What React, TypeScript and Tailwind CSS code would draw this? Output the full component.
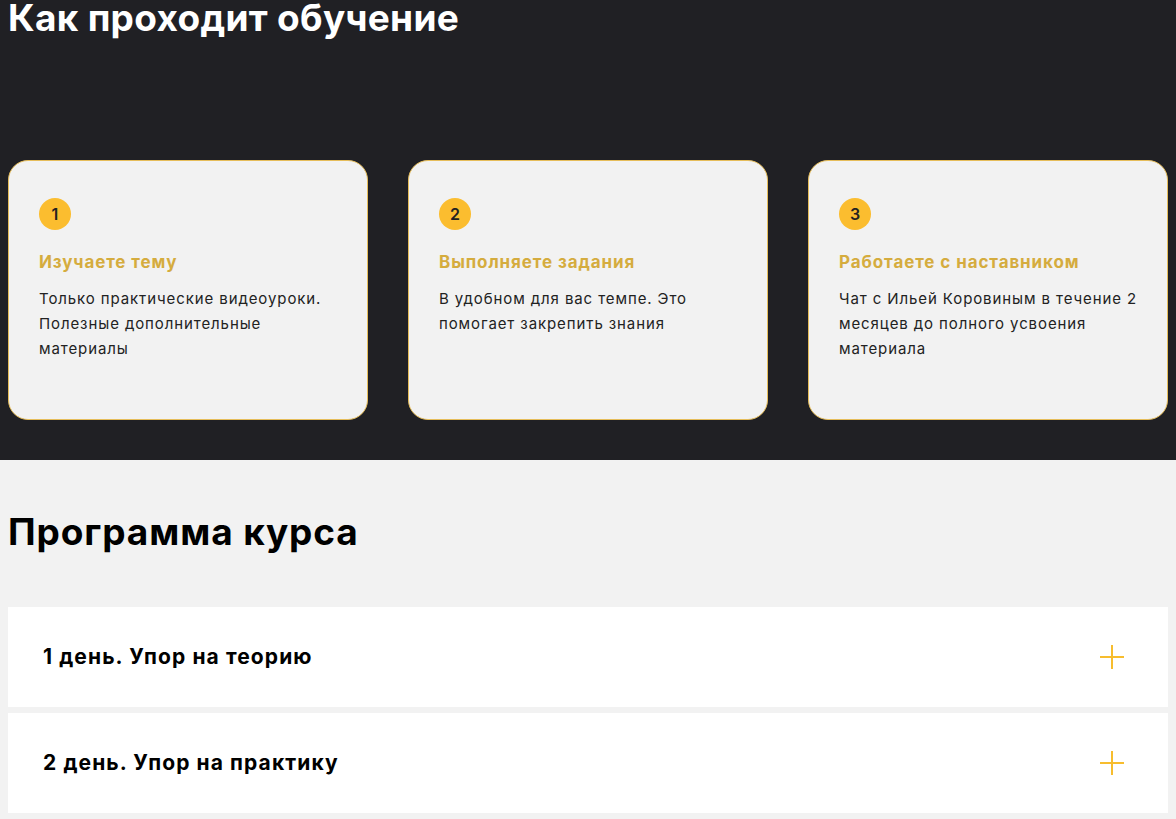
import React from 'react';

const steps = [
  {
    n: 1,
    title: 'Изучаете тему',
    text: 'Только практические видеоуроки. Полезные дополнительные материалы',
  },
  {
    n: 2,
    title: 'Выполняете задания',
    text: 'В удобном для вас темпе. Это помогает закрепить знания',
  },
  {
    n: 3,
    title: 'Работаете с наставником',
    text: 'Чат с Ильей Коровиным в течение 2 месяцев до полного усвоения материала',
  },
];

const days = ['1 день. Упор на теорию', '2 день. Упор на практику'];

const Plus = () => (
  <svg width="26" height="26" viewBox="0 0 26 26" fill="none">
    <path d="M13 1v24M1 13h24" stroke="#f7bd2e" strokeWidth="2" />
  </svg>
);

export default function App() {
  return (
    <div className="min-h-screen bg-[#f2f2f2]" style={{ fontFamily: 'Inter, "Noto Sans", sans-serif' }}>
      {/* Как проходит обучение */}
      <section className="bg-[#202024] px-2 pb-10">
        <h2 className="text-[37px] font-bold leading-[36px] text-white tracking-[0.3px]">Как проходит обучение</h2>
        <div className="mt-[124px] grid grid-cols-3 gap-10">
          {steps.map(step => (
            <div
              key={step.n}
              className="h-[260px] rounded-[20px] border border-[#e6bd5a] bg-[#f2f2f2] pl-[30px] pr-4 pt-[37px]"
            >
              <div className="flex h-8 w-8 items-center justify-center rounded-full bg-[#fbbd2f] text-[16px] font-semibold text-[#222]">
                {step.n}
              </div>
              <div className="mt-5 text-[17px] font-bold leading-6 tracking-[0.9px] text-[#d5ac3e]">{step.title}</div>
              <p className="mt-3 max-w-[300px] text-[15px] leading-[25px] tracking-[0.9px] text-[#222]">{step.text}</p>
            </div>
          ))}
        </div>
      </section>

      {/* Программа курса */}
      <section className="px-2 pt-[54px] pb-2">
        <h2 className="mb-[57px] text-[37px] font-bold leading-[36px] text-black tracking-[0.9px]">Программа курса</h2>
        <div className="flex flex-col gap-[6px]">
          {days.map(day => (
            <div key={day} className="flex h-[100px] items-center justify-between bg-white pl-[35px] pr-[43px]">
              <span className="text-[21px] font-bold tracking-[1.1px] text-black">{day}</span>
              <Plus />
            </div>
          ))}
        </div>
      </section>
    </div>
  );
}
